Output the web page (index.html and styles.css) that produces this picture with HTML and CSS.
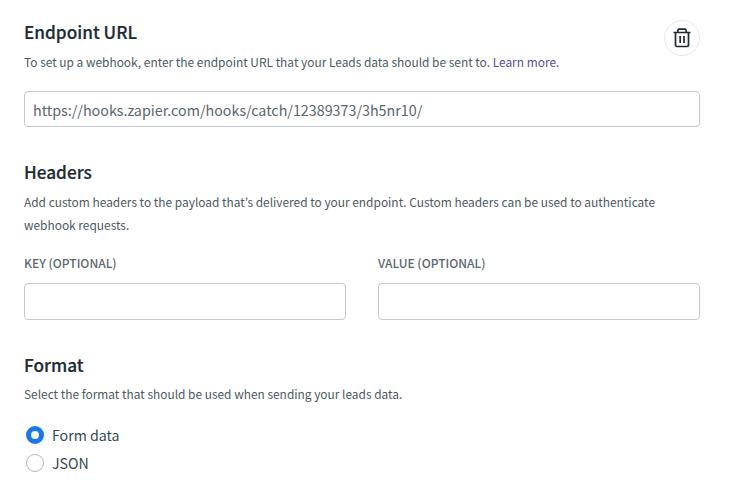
FILE: index.html
```html
<!DOCTYPE html>
<html lang="en">
<head>
<meta charset="utf-8">
<title>Webhook</title>
<link rel="stylesheet" href="styles.css">
</head>
<body>
<main class="page">
  <section class="endpoint">
    <div class="endpoint-head">
      <div>
        <h2 class="title">Endpoint URL</h2>
        <p class="desc">To set up a webhook, enter the endpoint URL that your Leads data should be sent to. <a class="link" href="#">Learn more</a>.</p>
      </div>
      <button class="trash" aria-label="Delete">
        <svg width="20" height="20" viewBox="0 0 20 20" fill="none" stroke="#1c2b33" stroke-width="1.7"><path d="M1.500 4.500h17M5.500 4.500l.6-2.600q.2-.7.9-.7h6q.7 0 .9.7l.6 2.600M3.500 4.500v12.500q0 1.500 1.500 1.500h10q1.500 0 1.500-1.500V4.500M8.200 8v7M12 8v7"/></svg>
      </button>
    </div>
    <input class="field url" value="https://hooks.zapier.com/hooks/catch/12389373/3h5nr10/">
  </section>
  <section class="headers">
    <h2 class="title">Headers</h2>
    <p class="desc multi">Add custom headers to the payload that’s delivered to your endpoint. Custom headers can be used to authenticate webhook requests.</p>
    <div class="kv">
      <label class="kv-item"><span class="label">KEY (OPTIONAL)</span><input class="field box"></label>
      <label class="kv-item"><span class="label">VALUE (OPTIONAL)</span><input class="field box"></label>
    </div>
  </section>
  <section class="format">
    <h2 class="title">Format</h2>
    <p class="desc tight">Select the format that should be used when sending your leads data.</p>
    <div class="radios">
      <div class="radio"><span class="dot on"></span>Form data</div>
      <div class="radio"><span class="dot"></span>JSON</div>
    </div>
  </section>
</main>
</body>
</html>
```
FILE: styles.css
```css
* { box-sizing: border-box; }
html, body { margin: 0; background: #fff; }
body { font-family: "Noto Sans CJK JP", "Noto Sans", sans-serif; color: #1c2b33; }
.page { width: 676px; margin-left: 24px; padding-top: 20px; height: 499px; overflow: hidden; }
.endpoint-head { display: flex; justify-content: space-between; align-items: flex-start; }
.title { margin: 0; font-size: 17.2px; line-height: 24px; font-weight: 500; -webkit-text-stroke: 0.2px #1c2b33; }
.desc { margin: 8px 0 0; font-size: 11.92px; line-height: 20px; color: #4b5a63; }
.desc.multi { margin-top: 6px; line-height: 23px; }
.desc.tight { margin-top: 7px; }
.link { color: #5b4a9e; text-decoration: none; }
.trash { width: 36px; height: 36px; border-radius: 50%; border: 1px solid #e6e8ea; background: #fff; display: flex; align-items: center; justify-content: center; padding: 0; }
.field { display: block; width: 100%; border: 1px solid #c4c9cc; border-radius: 4px; background: #fff; font: inherit; outline: none; }
.url { height: 36px; margin-top: 19px; padding: 0 8px; font-size: 14.3px; color: #5a666d; }
.headers { margin-top: 33px; }
.kv { display: flex; gap: 32px; margin-top: 19px; }
.kv-item { flex: 1; display: block; }
.label { display: block; font-size: 12px; line-height: 16px; font-weight: 500; color: #5a6670; }
.box { height: 37px; margin-top: 12px; }
.format { margin-top: 33px; }
.radios { margin-top: 17px; }
.radio { display: flex; align-items: center; gap: 8px; height: 28px; font-size: 14.2px; color: #344854; margin-left: 2px; }
.dot { width: 18px; height: 18px; border-radius: 50%; border: 1px solid #b5babd; background: #fff; }
.dot.on { border: 5px solid #1877f2; }
```
